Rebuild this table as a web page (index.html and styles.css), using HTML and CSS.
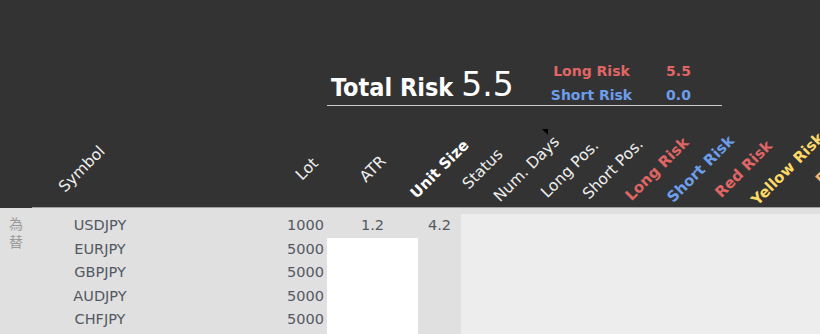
FILE: index.html
```html
<!DOCTYPE html>
<html lang="ja">
<head>
    <meta charset="UTF-8">
    <meta name="viewport" content="width=device-width, initial-scale=1.0">
    <title>Risk Sheet</title>
    <link rel="stylesheet" href="styles.css">
</head>
<body>

    <div class="sheet">

        <!-- risk totals above the table -->
        <div class="band summary">
            <div class="total">
                <span class="total-label">Total Risk</span>
                <span class="total-value">5.5</span>
            </div>
            <div class="side-label long">Long Risk</div>
            <div class="side-value long">5.5</div>
            <div class="side-label short">Short Risk</div>
            <div class="side-value short">0.0</div>
            <div class="summary-rule"></div>
        </div>

        <!-- slanted column headers -->
        <div class="band heads">
            <div class="head col-sym"><span>Symbol</span></div>
            <div class="head col-lot"><span>Lot</span></div>
            <div class="head"><span>ATR</span></div>
            <div class="head bold"><span>Unit Size</span></div>
            <div class="head"><span>Status</span></div>
            <div class="head note"><span>Num. Days</span></div>
            <div class="head"><span>Long Pos.</span></div>
            <div class="head"><span>Short Pos.</span></div>
            <div class="head bold red"><span>Long Risk</span></div>
            <div class="head bold blue"><span>Short Risk</span></div>
            <div class="head bold red"><span>Red Risk</span></div>
            <div class="head bold yellow"><span>Yellow Risk</span></div>
            <div class="head bold orange"><span>Risk</span></div>
        </div>
        <div class="heads-rule"></div>

        <!-- data rows -->
        <div class="data">
            <div class="grid">
                <div class="group"><span>為替</span></div>

                <div class="cell sym">USDJPY</div>
                <div class="cell lot">1000</div>
                <div class="cell atr">1.2</div>
                <div class="cell unit">4.2</div>

                <div class="cell sym">EURJPY</div>
                <div class="cell lot">5000</div>
                <div class="cell atr blank"></div>
                <div class="cell unit"></div>

                <div class="cell sym">GBPJPY</div>
                <div class="cell lot">5000</div>
                <div class="cell atr blank"></div>
                <div class="cell unit"></div>

                <div class="cell sym">AUDJPY</div>
                <div class="cell lot">5000</div>
                <div class="cell atr blank"></div>
                <div class="cell unit"></div>

                <div class="cell sym">CHFJPY</div>
                <div class="cell lot">5000</div>
                <div class="cell atr blank"></div>
                <div class="cell unit"></div>

                <div class="cell sym"></div>
                <div class="cell lot"></div>
                <div class="cell atr blank"></div>
                <div class="cell unit"></div>
            </div>
            <div class="panel"></div>
        </div>

    </div>

</body>
</html>
```

FILE: styles.css
```css
body {
    margin: 0;
    background-color: #333333;
    font-family: 'DejaVu Sans', 'Noto Sans CJK JP', sans-serif;
    overflow: hidden;
}

.sheet {
    height: 334px;
    overflow: hidden;
}

.band {
    display: grid;
    grid-template-columns: 32px 100px 155px 40px 91px 43px repeat(9, 43.5px);
}

/* totals */

.summary {
    margin-top: 58px;
    grid-template-rows: 23.5px 23.5px 1px;
}

.total {
    grid-column: 5 / 9;
    grid-row: 1 / 3;
    align-self: end;
    display: flex;
    align-items: baseline;
    gap: 8px;
    padding-left: 4px;
    padding-bottom: 1px;
    color: #ffffff;
    white-space: nowrap;
}

.total-label {
    font-family: 'DejaVu Sans Condensed', 'DejaVu Sans', sans-serif;
    font-weight: bold;
    font-size: 25px;
}

.total-value {
    font-size: 33px;
}

.side-label,
.side-value {
    font-size: 14px;
    font-weight: bold;
    text-align: center;
    line-height: 23.5px;
    padding-top: 2px;
}

.side-label {
    grid-column: 9 / 11;
}

.side-value {
    grid-column: 11 / 13;
}

.long {
    color: #e06666;
}

.short {
    color: #6d9eeb;
}

.summary-rule {
    grid-column: 5 / 13;
    grid-row: 3;
    background-color: #cccccc;
}

/* headers */

.heads {
    margin-top: 22.5px;
    height: 78.5px;
}

.head {
    display: flex;
    justify-content: center;
    align-items: center;
    position: relative;
    color: #eeeeee;
    font-size: 15.5px;
}

.head span {
    white-space: nowrap;
    transform: translateY(1px) rotate(-45deg);
}

.col-sym {
    grid-column: 2;
}

.col-lot {
    grid-column: 4;
}

.bold {
    font-weight: bold;
    font-size: 15px;
    color: #ffffff;
}

.red {
    color: #e06666;
}

.blue {
    color: #6d9eeb;
}

.yellow {
    color: #ffd966;
}

.orange {
    color: #f6b26b;
}

/* comment marker in the corner of a cell */
.note::after {
    content: "";
    position: absolute;
    top: 0;
    right: 0;
    border-top: 6px solid #000000;
    border-left: 6px solid transparent;
}

.heads-rule {
    height: 1px;
    margin-left: 32px;
    background-color: #a0a0a0;
}

/* rows */

.data {
    display: flex;
    background-color: #e0e0e0;
    height: 200px;
}

.grid {
    display: grid;
    grid-template-columns: 32px 100px 155px 40px 91px 43px;
    grid-template-rows: 29.5px repeat(5, 23.5px);
}

.group {
    grid-column: 1;
    grid-row: 1 / 7;
    display: flex;
    justify-content: center;
    padding-top: 9px;
}

.group span {
    writing-mode: vertical-rl;
    letter-spacing: 4px;
    font-family: 'Noto Sans CJK JP', sans-serif;
    font-size: 14px;
    line-height: 16px;
    color: #9a9a9a;
}

.cell {
    font-size: 14.5px;
    line-height: 23.5px;
    color: #535862;
    align-self: end;
    height: 23.5px;
}

.sym {
    grid-column: 2 / 4;
    width: 136px;
    text-align: center;
}

.lot {
    grid-column: 4;
    text-align: right;
    padding-right: 3px;
}

.atr {
    grid-column: 5;
    text-align: center;
}

.unit {
    grid-column: 6;
    text-align: center;
}

.blank {
    background-color: #ffffff;
}

.panel {
    flex: 1;
    margin-top: 6px;
    background-color: #ededed;
}
```
